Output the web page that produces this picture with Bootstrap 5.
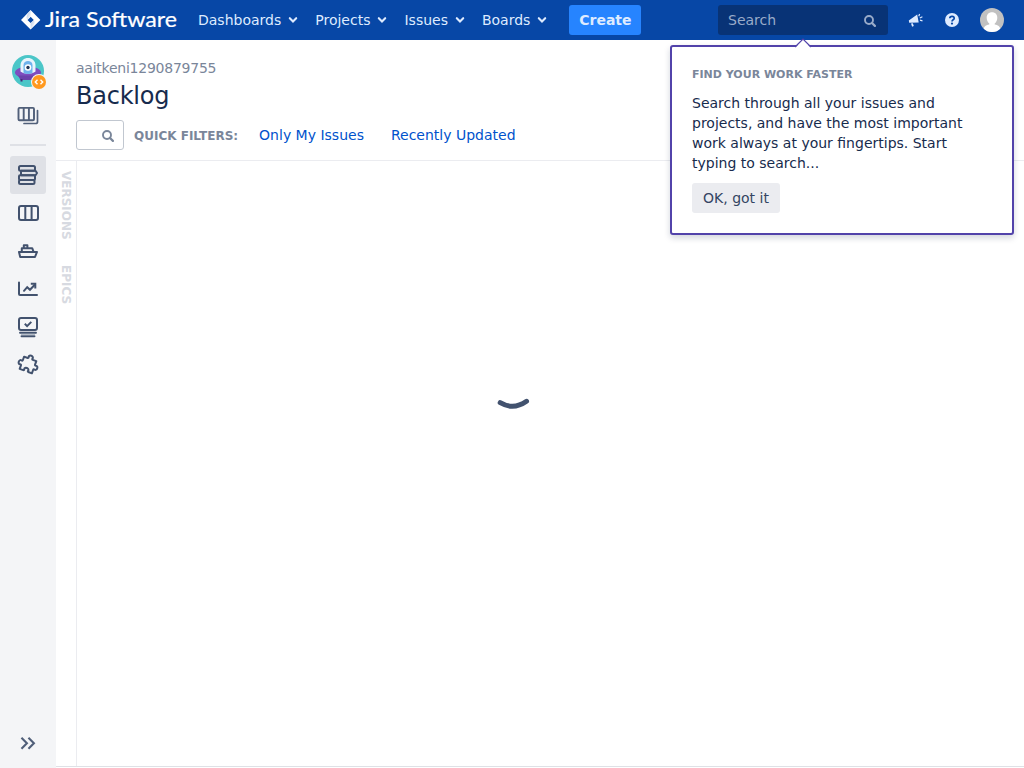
<!DOCTYPE html>
<html lang="en">
<head>
<meta charset="utf-8">
<title>Backlog - Jira Software</title>
<link href="https://cdn.jsdelivr.net/npm/bootstrap@5.3.0/dist/css/bootstrap.min.css" rel="stylesheet">
<style>
body{font:14px/20px "DejaVu Sans",sans-serif;color:#172b4d;height:768px;overflow:hidden}
svg{display:block;flex:none}
.topbar{height:40px;background:#0747a6;color:#deebff;padding:0 20px!important;flex-wrap:nowrap!important}
.wordmark{font:21px/40px Lato,sans-serif;color:#fff}
.menu-item{color:#deebff;padding:0 7px 0 10px;height:30px;gap:7px}
.menu-item:hover{color:#fff}
.create{background:#2684ff;color:#deebff;font-weight:700;height:30px;width:72px;border-radius:3px;margin-left:15px}
.quick{width:170px;height:30px;border-radius:3px;background:#083376;color:#99abc9;padding:0 12px 0 10px}
.side{width:56px;background:#f4f5f7;padding-top:11px}
.side-item{width:36px;height:38px;border-radius:3px}
.side-item.current{background:#dfe1e6}
.divider{width:36px;height:2px;background:#dfe1e6;margin:9px 0 10px}
.page-head{height:121px;padding:18px 20px 0;border-bottom:1px solid #ebecf0}
.crumb,.label{color:#7a869a}
.crumb{letter-spacing:-.24px}
.page-head h1{font-size:24px;line-height:28px;font-weight:400;margin:4px 0 10px;letter-spacing:-.24px}
.filter-box{width:48px;height:30px;border:1px solid #c1c7d0;border-radius:3px;padding-right:9px}
.label{font-size:12px;font-weight:700;margin-left:10px;padding-top:1px}
.flt{color:#0052cc;text-decoration:none}
.tabs-col{width:21px;border-right:1px solid #ebecf0;padding-top:10px}
.vtab{writing-mode:vertical-rl;font-size:12px;line-height:20px;font-weight:700;color:#d7dae1}
.work{border-bottom:1px solid #dfe1e6;height:606px}
.help-tip{position:absolute;left:670px;top:45px;width:344px;height:190px;background:#fff;border:2px solid #5243aa;border-radius:3px;padding:20px 20px;box-shadow:0 3px 6px rgba(9,30,66,.18)}
.help-tip h2{font-size:11px;line-height:16px;font-weight:700;color:#7a869a;margin:0 0 10px}
.help-tip p{margin:0 0 10px}
.tip-arrow{position:absolute;left:122px;top:-9px}
.ok-btn{background:#ebecf0;color:#344563;border-radius:3px;height:30px;width:88px}
.spin{position:absolute;left:492px;top:392px}
.toggle-side{margin-top:auto;height:50px}
</style>
</head>
<body class="d-flex flex-column bg-white">
<svg width="0" height="0" class="position-absolute">
<symbol id="chev" viewBox="0 0 10 8"><path d="M1.8 2.2 5 5.400l3.200-3.200" fill="none" stroke="currentColor" stroke-width="2.100" stroke-linecap="round"/></symbol>
<symbol id="glass" viewBox="0 0 12 12"><circle cx="5" cy="5" r="4" fill="none" stroke="currentColor" stroke-width="1.900"/><path d="m8 8 2.900 2.900" stroke="currentColor" stroke-width="2.200" stroke-linecap="round"/></symbol>
</svg>
<nav class="navbar topbar justify-content-start">
  <a class="d-flex align-items-center text-decoration-none" href="#">
    <svg width="22" height="20" viewBox="0 0 22 20"><defs><linearGradient id="lg" x1="0" y1="0" x2="1" y2="1"><stop stop-color="#a9bfe0"/><stop offset="1" stop-color="#fff"/></linearGradient></defs><path fill="#fff" fill-rule="evenodd" d="M10.600 0 20.400 9.900 10.600 19.600 1 9.900zm0 6.800-3.100 3.100 3.100 3.200 3.200-3.200z"/><path fill="url(#lg)" d="M10.600 0.800v6L7.500 9.900C5.800 7.500 6.200 4.800 10.600.8z"/><path fill="url(#lg)" d="M10.600 18.800v-5.700l3.200-3.200c1.800 2.500.8 5-3.200 8.900z" opacity=".8"/></svg>
    <svg width="136" height="40" style="margin-left:2px"><text class="wordmark" x="1" y="27" fill="#fff" stroke="#fff" stroke-width=".2" textLength="132" lengthAdjust="spacingAndGlyphs">Jira Software</text></svg>
  </a>
  <div class="d-flex align-items-center" style="margin-left:8px">
    <a class="menu-item d-flex align-items-center text-decoration-none" href="#">Dashboards<svg width="10" height="8"><use href="#chev"/></svg></a>
    <a class="menu-item d-flex align-items-center text-decoration-none" href="#">Projects<svg width="10" height="8"><use href="#chev"/></svg></a>
    <a class="menu-item d-flex align-items-center text-decoration-none" href="#">Issues<svg width="10" height="8"><use href="#chev"/></svg></a>
    <a class="menu-item d-flex align-items-center text-decoration-none" href="#">Boards<svg width="10" height="8"><use href="#chev"/></svg></a>
    <button class="create border-0 p-0">Create</button>
  </div>
  <div class="d-flex align-items-center ms-auto">
    <div class="quick d-flex align-items-center justify-content-between">Search<svg width="12" height="12" style="margin-top:2px"><use href="#glass"/></svg></div>
    <svg width="16" height="16" viewBox="0 0 16 16" style="margin-left:20px" fill="#deebff"><path d="M.8 8.600 9.200 2.400l1.500 8.100-9.500.2zM3 11.500l1.800-.2 1 2.800-1.700.6z"/><path d="m10.800 4.200.8-2.200M11.800 6l2.600-1.200M12 8.200l2.500.6" stroke="#deebff" stroke-width="1.200"/></svg>
    <svg width="14" height="14" viewBox="0 0 14 14" style="margin-left:21px"><circle cx="7" cy="7" r="7" fill="#deebff"/><path d="M4.800 5.300C4.900 2.700 9.200 2.700 9.200 5.200 9.200 6.800 7 6.700 7 8.500" fill="none" stroke="#0747a6" stroke-width="1.700"/><circle cx="7" cy="10.600" r="1.100" fill="#0747a6"/></svg>
    <svg width="24" height="24" viewBox="0 0 24 24" style="margin-left:21px"><defs><clipPath id="av"><circle cx="12" cy="12" r="12"/></clipPath></defs><g clip-path="url(#av)"><path fill="#c1c1c1" d="M0 0h24v24H0z"/><path fill="#fff" d="M12 4.300c3.200 0 5.300 2.200 5.300 5.400 0 2.600-1 4.500-2.600 5.700v1.200c4 .6 5.800 2.500 6.300 7.400H3c.5-4.900 2.300-6.800 6.300-7.400v-1.200c-1.600-1.200-2.600-3.100-2.600-5.700 0-3.200 2.100-5.400 5.300-5.400z"/></g></svg>
  </div>
</nav>
<div class="d-flex flex-grow-1">
  <aside class="side d-flex flex-column align-items-center flex-shrink-0">
    <svg width="36" height="44" viewBox="0 0 36 44"><defs><clipPath id="pj"><circle cx="18" cy="20" r="16"/></clipPath></defs><g clip-path="url(#pj)"><path fill="#4bc6c8" d="M0 0h36v40H0z"/><ellipse cx="18" cy="21.500" rx="13" ry="6" fill="#7e4dbf"/><path fill="#6b42ab" d="M8 24.500h20l-2.500 4.500H10.500z"/><path d="M11.500 28v2.500M24 28v2.500" stroke="#442c78" stroke-width="2"/><path fill="#e9f5fc" d="M10.500 20.500V14.500c0-10 15-10 15 0v6c-4 3-11 3-15 0z"/><path fill="#6fb3ec" d="M13.500 22v-8c0-5.500 9-5.500 9 0v8c-3 1.300-6 1.300-9 0z"/><circle cx="18" cy="16.500" r="3.300" fill="#fff"/><circle cx="18" cy="16.500" r="1.700" fill="#253858"/></g><circle cx="29" cy="31" r="8" fill="#f4f5f7"/><circle cx="29" cy="31" r="7" fill="#ff991f"/><path d="m27.500 28.800-2.200 2.200 2.200 2.200m3-4.400 2.200 2.200-2.200 2.200" fill="none" stroke="#fff" stroke-width="1.400"/></svg>
    <a class="side-item d-flex align-items-center justify-content-center" style="height:40px" href="#"><svg width="24" height="24" viewBox="0 0 24 24" fill="none" stroke="#505f79" stroke-width="1.900" stroke-linejoin="round"><rect x="2.500" y="4.900" width="15.500" height="12.300" rx="1"/><path d="M7.700 5v12M12.900 5v12"/><path stroke-width="1.700" stroke-linecap="round" d="M21.500 7.500v11.200q0 1.800-1.800 1.800H8"/></svg></a>
    <div class="divider" style="margin-top:9px"></div>
    <a class="side-item current d-flex align-items-center justify-content-center" href="#"><svg width="24" height="24" viewBox="0 0 24 24" fill="none" stroke="#42526e" stroke-width="2" stroke-linejoin="round"><rect x="3" y="3" width="16" height="4.700" rx="1.500"/><path d="M5 7.700h14.500l1.500 2.300-1.500 2.300H5z"/><rect x="3" y="12.300" width="16" height="4.600" rx="1"/><rect x="3" y="16.900" width="15.500" height="4.200" rx="1.500"/></svg></a>
    <a class="side-item d-flex align-items-center justify-content-center" href="#"><svg width="24" height="24" viewBox="0 0 24 24" fill="none" stroke="#42526e" stroke-width="2"><rect x="3" y="5" width="19" height="14" rx="2"/><path d="M9.300 5v14M15.600 5v14"/></svg></a>
    <a class="side-item d-flex align-items-center justify-content-center" href="#"><svg width="24" height="24" viewBox="0 0 24 24" fill="none" stroke="#42526e" stroke-width="2" stroke-linejoin="round"><path d="M3 12.900h18l-2 5.100H4.200zM5.800 12.500V9.200h10.400l1.300 3.500M7.800 9V6.300h3.600V9"/></svg></a>
    <a class="side-item d-flex align-items-center justify-content-center" href="#"><svg width="24" height="24" viewBox="0 0 24 24" fill="none" stroke="#42526e" stroke-width="2" stroke-linecap="round"><path d="M3 5.500V17q0 1 1 1h17"/><path d="m8 13.800 3.200-3.600 2.800 2.600 4.500-4.800"/><path d="M14.800 6.800h4.500v4.600" stroke-linecap="butt" stroke-linejoin="miter"/></svg></a>
    <a class="side-item d-flex align-items-center justify-content-center" href="#"><svg width="24" height="24" viewBox="0 0 24 24" fill="none" stroke="#42526e"><rect x="3" y="3" width="18" height="12" rx="2" stroke-width="2"/><path d="m8.800 8.800 2.300 2.300 4.200-4.200" stroke-width="2"/><path d="M4 17.800h16M5.500 21.200h13" stroke-width="1.900" stroke-linecap="round"/><path d="M5 19.500h14" stroke="#b7bec9" stroke-width="1.200"/></svg></a>
    <a class="side-item d-flex align-items-center justify-content-center" href="#"><svg width="24" height="24" viewBox="0 0 24 24" fill="none" stroke="#42526e" stroke-width="2" stroke-linejoin="round"><path transform="rotate(20 12 12)" d="M5.500 5.500H9.300C10 5.500 10.200 5 9.900 4.400 9 1.500 15 1.500 14.100 4.400c-.3.600-.1 1.100.6 1.100h3.800v3.800c0 .7.500.9 1.100.6 2.900-.9 2.900 5.100 0 4.200-.6-.3-1.100-.1-1.100.6v3.800h-3.800c-.7 0-.9-.5-.6-1.100.9-2.900-5.100-2.900-4.200 0 .3.600.1 1.100-.6 1.100H5.500v-3.800c0-.7-.5-.9-1.100-.6-2.900.9-2.900-5.100 0-4.200.6.300 1.100.1 1.100-.6z"/></svg></a>
    <a class="toggle-side d-flex justify-content-center" href="#"><svg width="16" height="50" viewBox="0 0 16 50" fill="none" stroke="#505f79" stroke-width="2.100" stroke-linecap="square"><path d="m2.200 20.500 4.700 4.700-4.700 4.700M9.200 20.500l4.700 4.700-4.700 4.700"/></svg></a>
  </aside>
  <main class="flex-grow-1">
    <header class="page-head">
      <div class="crumb">aaitkeni1290879755</div>
      <h1>Backlog</h1>
      <div class="d-flex align-items-center">
        <div class="filter-box d-flex align-items-center justify-content-end" style="color:#7a869a"><svg width="12" height="12" style="margin-top:2px"><use href="#glass"/></svg></div>
        <span class="label">QUICK FILTERS:</span>
        <a class="flt" href="#" style="margin-left:21px">Only My Issues</a>
        <a class="flt" href="#" style="margin-left:27px">Recently Updated</a>
      </div>
    </header>
    <div class="work d-flex">
      <div class="tabs-col d-flex flex-column align-items-center"><span class="vtab">VERSIONS</span><span class="vtab" style="margin-top:25px">EPICS</span></div>
    </div>
  </main>
</div>
<svg class="spin" width="40" height="20" viewBox="0 0 40 20" fill="none" stroke="#42526e" stroke-width="5" stroke-linecap="round"><path d="M8.200 10.700Q21.500 18.500 34.500 9.300"/></svg>
<section class="help-tip">
  <svg class="tip-arrow" width="18" height="10" viewBox="0 0 18 10"><path d="M1 10 9 1.500l8 8.500z" fill="#fff"/><path d="M1 9 9 1l8 8" fill="none" stroke="#5243aa" stroke-width="1.200"/></svg>
  <h2>FIND YOUR WORK FASTER</h2>
  <p>Search through all your issues and projects, and have the most important work always at your fingertips. Start typing to search...</p>
  <button class="ok-btn border-0 p-0">OK, got it</button>
</section>
<script src="https://cdn.jsdelivr.net/npm/bootstrap@5.3.0/dist/js/bootstrap.bundle.min.js"></script>
</body>
</html>
